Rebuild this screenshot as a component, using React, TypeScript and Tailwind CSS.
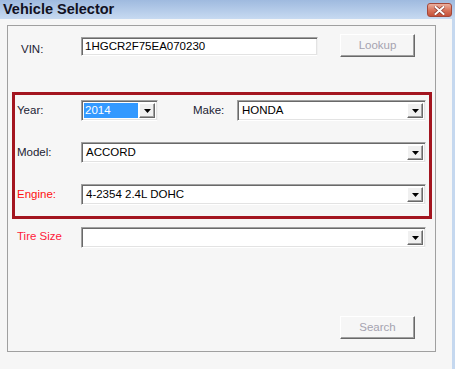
import React from 'react';

const font = { fontFamily: '"Liberation Sans", Arial, sans-serif' };

const DropButton: React.FC = () => (
    <div className="w-[16px] h-full flex items-center justify-center bg-[#f0f0f0] border-t border-l border-t-white border-l-white border-b border-r border-b-[#696969] border-r-[#696969] shadow-[inset_-1px_-1px_0_#a0a0a0]">
        <svg width="7" height="4" viewBox="0 0 7 4">
            <path d="M0 0H7L3.5 4Z" fill="#000" />
        </svg>
    </div>
);

interface ComboProps {
    value?: string;
    width: string;
    selected?: boolean;
}

const Combo: React.FC<ComboProps> = ({ value = '', width, selected = false }) => (
    <div
        className={`${width} h-[21px] flex bg-white border-t border-l border-t-[#a0a0a0] border-l-[#a0a0a0] border-b border-r border-b-white border-r-[#f0f0f0] shadow-[inset_1px_1px_0_#696969,inset_-1px_-1px_0_#e3e3e3] p-[2px]`}
    >
        <div className="flex-1 flex items-center pr-[1px]">
            {selected ? (
                <div className="w-full h-full flex items-center bg-[#3399ff] text-white pl-[1px]">{value}</div>
            ) : (
                <span className="pl-[2px] text-black">{value}</span>
            )}
        </div>
        <DropButton />
    </div>
);

const Button: React.FC<{ label: string }> = ({ label }) => (
    <div className="w-[75px] h-[23px] flex items-center justify-center border-t border-l border-t-white border-l-white border-b border-r border-b-[#696969] border-r-[#696969] shadow-[inset_-1px_-1px_0_#a0a0a0] text-[#a5a3b0]">
        {label}
    </div>
);

export default function App() {
    return (
        <div className="w-[455px] h-[369px] flex flex-col bg-[#f6f6f6] text-[11.5px] overflow-hidden" style={font}>
            <div className="h-[19px] flex items-center justify-between bg-gradient-to-b from-[#9fbadf] to-[#c7daf1] pl-[3px] pr-[3px]">
                <span className="text-[14.5px] font-bold text-[#111122] leading-none">Vehicle Selector</span>
                <div className="w-[25px] h-[14px] rounded-[3px] border border-[#a4483a] bg-gradient-to-b from-[#eab0a0] via-[#d9765e] to-[#c4513a] flex items-center justify-center mt-[1px]">
                    <svg width="11" height="9" viewBox="0 0 11 9">
                        <path d="M1.5 1L9.5 8M9.5 1L1.5 8" stroke="#8a3a30" strokeWidth="3.4" strokeLinecap="square" />
                        <path d="M1.5 1L9.5 8M9.5 1L1.5 8" stroke="#fff" strokeWidth="2" strokeLinecap="square" />
                    </svg>
                </div>
            </div>

            <div className="flex-1 flex border-r-[3px] border-r-[#c5d8ef]">
                <div className="ml-[7px] mt-[6px] w-[429px] h-[327px] border border-[#a0a0a0] flex flex-col">
                    <div className="flex mt-[8px] h-[23px]">
                        <div className="w-[73px] pl-[13px] pt-[7px] text-[#222233]">VIN:</div>
                        <div className="mt-[3px] w-[237px] h-[19px] flex items-center bg-white border-t border-l border-t-[#a0a0a0] border-l-[#a0a0a0] border-b border-r border-b-white border-r-[#f0f0f0] shadow-[inset_1px_1px_0_#696969,inset_-1px_-1px_0_#e3e3e3] pl-[3px] text-black">
                            1HGCR2F75EA070230
                        </div>
                        <div className="ml-[22px]">
                            <Button label="Lookup" />
                        </div>
                    </div>

                    <div className="ml-[4px] mt-[35px] w-[420px] h-[127px] border-[3px] border-[#a3151f] flex flex-col gap-[21px] pt-[5px]">
                        <div className="flex items-center">
                            <div className="w-[66px] pl-[2px] text-[#222233]">Year:</div>
                            <Combo value="2014" width="w-[77px]" selected />
                            <div className="w-[79px] pl-[35px] text-[#222233]">Make:</div>
                            <Combo value="HONDA" width="w-[189px]" />
                        </div>
                        <div className="flex items-center">
                            <div className="w-[66px] pl-[2px] text-[#222233]">Model:</div>
                            <Combo value="ACCORD" width="w-[345px]" />
                        </div>
                        <div className="flex items-center">
                            <div className="w-[66px] pl-[2px] text-[#ff1010]">Engine:</div>
                            <Combo value="4-2354 2.4L DOHC" width="w-[345px]" />
                        </div>
                    </div>

                    <div className="flex mt-[8px]">
                        <div className="w-[73px] pl-[9px] pt-[1px] text-[#ff1a3a]">Tire Size</div>
                        <Combo width="w-[345px]" />
                    </div>

                    <div className="flex mt-[68px] ml-[332px]">
                        <Button label="Search" />
                    </div>
                </div>
            </div>
        </div>
    );
}
